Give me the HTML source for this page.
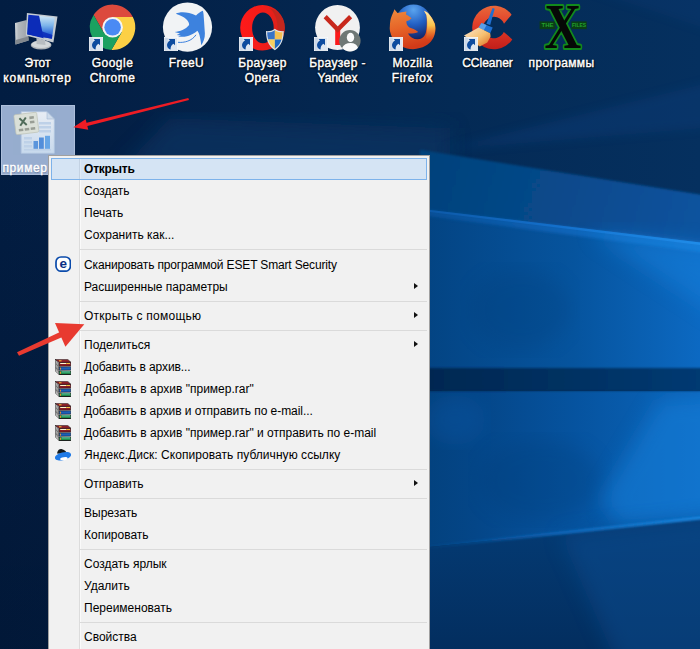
<!DOCTYPE html>
<html lang="ru">
<head>
<meta charset="utf-8">
<title>Открыть с помощью</title>
<style>
html,body{margin:0;padding:0;}
body{width:700px;height:649px;overflow:hidden;position:relative;background:#021a3a;font-family:"Liberation Sans",sans-serif;}
#bg{position:absolute;left:0;top:0;width:700px;height:649px;display:block;}
.lbl{position:absolute;left:-10px;width:95px;top:56px;text-align:center;color:#fff;font-size:12px;line-height:15px;
 -webkit-text-stroke:0.4px #fff;text-shadow:0 1px 2px rgba(0,0,0,.9),0 0 2px rgba(0,0,0,.7),1px 1px 1px rgba(0,0,0,.6);}
#sel{position:absolute;left:1px;top:105px;width:74px;height:70px;background:#97adcf;box-sizing:border-box;border:1px solid #adbfdb;}
#menu{position:absolute;left:48px;top:155px;width:382px;height:497px;box-sizing:border-box;border:1px solid #a0a0a0;background:#f1f1f1;padding:2px;font-size:12px;color:#000;}
#menu:before{content:"";position:absolute;left:30px;top:2px;bottom:2px;width:1px;background:#dcdcdc;border-right:1px solid #fafafa;}
.mi.hl:before{content:"";position:absolute;left:27px;top:0;bottom:0;width:1px;background:#c3d2e3;border-right:1px solid #dfeaf6;}
.mi{position:relative;height:22px;line-height:23px;padding-left:33px;white-space:nowrap;box-sizing:border-box;}
.mi.hl{background:#d5e4f4;border:1px solid #7db2ea;line-height:21px;padding-left:32px;font-weight:bold;letter-spacing:-0.2px;}
.sep{height:7px;position:relative;}
.sep:after{content:"";position:absolute;left:29px;right:0;top:3px;height:1px;background:#dadada;}
.sub:after{content:"";position:absolute;right:9px;top:7px;border-left:4px solid #111;border-top:3.5px solid transparent;border-bottom:3.5px solid transparent;}
.mi svg{position:absolute;left:4px;top:2px;width:16px;height:16px;}
</style>
</head>
<body>
<svg id="bg" viewBox="0 0 700 649">
 <defs>
  <linearGradient id="g0" gradientUnits="userSpaceOnUse" x1="0" y1="0" x2="700" y2="0">
   <stop offset="0" stop-color="#021d42"/><stop offset="0.15" stop-color="#031f45"/><stop offset="0.45" stop-color="#04264f"/><stop offset="0.65" stop-color="#042a55"/><stop offset="1" stop-color="#05305f"/>
  </linearGradient>
  <linearGradient id="gb" gradientUnits="userSpaceOnUse" x1="430" y1="160" x2="700" y2="235">
   <stop offset="0" stop-color="#06427c"/><stop offset="0.5" stop-color="#074a8c"/><stop offset="1" stop-color="#09539f"/>
  </linearGradient>
  <linearGradient id="gp1" gradientUnits="userSpaceOnUse" x1="420" y1="0" x2="700" y2="0">
   <stop offset="0" stop-color="#034381"/><stop offset="0.15" stop-color="#04488a"/><stop offset="0.55" stop-color="#06549e"/><stop offset="1" stop-color="#0c69c2"/>
  </linearGradient>
  <linearGradient id="gp2" gradientUnits="userSpaceOnUse" x1="420" y1="0" x2="700" y2="0">
   <stop offset="0" stop-color="#03417d"/><stop offset="0.2" stop-color="#044688"/><stop offset="0.55" stop-color="#06539f"/><stop offset="1" stop-color="#0b66bc"/>
  </linearGradient>
  <linearGradient id="gl" gradientUnits="userSpaceOnUse" x1="420" y1="0" x2="700" y2="0">
   <stop offset="0" stop-color="#0c58a6"/><stop offset="0.5" stop-color="#1470cc"/><stop offset="1" stop-color="#2290ec"/>
  </linearGradient>
  <linearGradient id="gband" gradientUnits="userSpaceOnUse" x1="420" y1="0" x2="700" y2="0">
   <stop offset="0" stop-color="#032750"/><stop offset="1" stop-color="#063a72"/>
  </linearGradient>
  <linearGradient id="gd" gradientUnits="userSpaceOnUse" x1="0" y1="520" x2="0" y2="649">
   <stop offset="0" stop-color="#043b74"/><stop offset="1" stop-color="#032e5f"/>
  </linearGradient>
  <linearGradient id="gl2" gradientUnits="userSpaceOnUse" x1="420" y1="0" x2="700" y2="0">
   <stop offset="0" stop-color="#0a56a2" stop-opacity="0"/><stop offset="0.5" stop-color="#1068bc"/><stop offset="1" stop-color="#1c88e2"/>
  </linearGradient>
  <linearGradient id="gv" gradientUnits="userSpaceOnUse" x1="0" y1="150" x2="0" y2="649"><stop offset="0" stop-color="#000c20" stop-opacity="0"/><stop offset="1" stop-color="#000c20" stop-opacity="0.3"/></linearGradient>
  <filter id="b1"><feGaussianBlur stdDeviation="0.8"/></filter>
  <filter id="b2"><feGaussianBlur stdDeviation="1.5"/></filter>
  <filter id="b4"><feGaussianBlur stdDeviation="5"/></filter>
  <filter id="b8"><feGaussianBlur stdDeviation="10"/></filter>
 </defs>
 <rect width="700" height="649" fill="url(#g0)"/>
 <rect x="0" y="150" width="430" height="499" fill="url(#gv)"/>
 <polygon points="170,118 450,128 450,170 120,170" fill="#083664" opacity="0.65" filter="url(#b8)"/>
 <polygon points="560,-20 740,-20 740,40" fill="#0b3d7c" opacity="0.25" filter="url(#b4)"/>
 <polygon points="440,150 740,75 740,125" fill="#0c3c7a" opacity="0.4" filter="url(#b4)"/>
 <polygon points="420,149.800 730,199.400 730,250 420,212" fill="url(#gb)" filter="url(#b1)"/>
 <polygon points="420,208.700 730,246 730,372 420,372" fill="url(#gp1)"/>
 <polygon points="420,209 730,246.300 730,256 420,215" fill="url(#gl)" opacity="0.55" filter="url(#b2)"/>
 <polygon points="420,208.700 730,246 730,248.800 420,210.700" fill="url(#gl)"/>
 <polygon points="420,391 730,391 730,514.800 420,548.100" fill="url(#gp2)"/>
 <polygon points="600,500 660,400 740,395 740,519 620,527" fill="#1580dc" opacity="0.55" filter="url(#b8)"/>
 <polygon points="590,232 740,250 740,330" fill="#1580dc" opacity="0.5" filter="url(#b8)"/>
 <ellipse cx="520" cy="310" rx="50" ry="40" fill="#033b74" opacity="0.22" filter="url(#b8)"/>
 <ellipse cx="540" cy="480" rx="60" ry="40" fill="#033b74" opacity="0.25" filter="url(#b8)"/>
 <ellipse cx="455" cy="420" rx="30" ry="25" fill="#0b5cae" opacity="0.3" filter="url(#b8)"/>
 <rect x="420" y="368" width="320" height="23" fill="url(#gband)" filter="url(#b1)"/>
 <polygon points="420,548.100 730,514.800 730,660 420,660" fill="url(#gd)"/>
 <polygon points="560,534 740,514 740,670 620,670" fill="#0a4f94" opacity="0.45" filter="url(#b8)"/>
 <polygon points="420,546.600 730,513.300 730,516.300 420,549.600" fill="url(#gl2)" filter="url(#b1)"/>
</svg>


<div id="sel"></div>
<svg id="art" viewBox="0 0 700 649" style="position:absolute;left:0;top:0;width:700px;height:649px;">
 <defs>
  <linearGradient id="scr" x1="0" y1="0" x2="0" y2="1"><stop offset="0" stop-color="#d8ecf7"/><stop offset="0.45" stop-color="#7db4ea"/><stop offset="0.8" stop-color="#2c68d8"/><stop offset="1" stop-color="#0d32c0"/></linearGradient>
  <linearGradient id="slv" x1="0" y1="0" x2="1" y2="0"><stop offset="0" stop-color="#d4d8dc"/><stop offset="0.25" stop-color="#b4b9be"/><stop offset="1" stop-color="#9aa0a6"/></linearGradient>
  <linearGradient id="opr" x1="0" y1="0" x2="1" y2="0"><stop offset="0" stop-color="#ff1a1a"/><stop offset="0.5" stop-color="#f21c18"/><stop offset="1" stop-color="#d8241c"/></linearGradient>
  <radialGradient id="ffg" cx="0.5" cy="0.15" r="0.9"><stop offset="0" stop-color="#5aa4ee"/><stop offset="0.45" stop-color="#2360c4"/><stop offset="0.8" stop-color="#16327c"/><stop offset="1" stop-color="#101c50"/></radialGradient>
  <linearGradient id="fox" x1="0" y1="0" x2="0.25" y2="1"><stop offset="0" stop-color="#ee8a3c"/><stop offset="0.5" stop-color="#e66428"/><stop offset="1" stop-color="#d23a18"/></linearGradient>
  <linearGradient id="foxt" x1="0" y1="0" x2="0" y2="1"><stop offset="0" stop-color="#fff0b0"/><stop offset="0.5" stop-color="#fbc24a"/><stop offset="1" stop-color="#ee7a28" stop-opacity="0"/></linearGradient>
  <linearGradient id="ccr" x1="0" y1="0" x2="0" y2="1"><stop offset="0" stop-color="#e8683a"/><stop offset="0.45" stop-color="#e23c28"/><stop offset="1" stop-color="#c21e1a"/></linearGradient>
  <linearGradient id="brs" x1="0" y1="0" x2="1" y2="1"><stop offset="0" stop-color="#fbe6d2"/><stop offset="0.55" stop-color="#f6c070"/><stop offset="1" stop-color="#d86a20"/></linearGradient>
  <linearGradient id="pg" x1="0" y1="0" x2="0" y2="1"><stop offset="0" stop-color="#ffffff"/><stop offset="1" stop-color="#d6e6f6"/></linearGradient>
  <g id="sc">
   <rect x="0.4" y="0.4" width="13.2" height="13.200" fill="#dfe7f1" stroke="#f7f9fc" stroke-width="0.8"/>
   <rect x="0.8" y="0.8" width="3" height="12.400" fill="#c3d1e4" opacity="0.7"/>
   <path d="M4.6 2 H11 V8.3 L9.4 6.700 C7.600 7.800 6.400 9.800 6.600 12.600 C5.200 12.400 3.600 11 3.100 9 C2.700 6.800 3.800 4.600 6 3.400 Z" fill="#0e4c9f"/>
  </g>
 </defs>

 <!-- Этот компьютер -->
 <g>
  <polygon points="15,23 26.6,20 28.700,40.400 15.500,44.500" fill="url(#slv)"/>
  <polygon points="15.500,40 28.300,36.500 28.700,40.400 15.500,44.500" fill="#82888e"/>
  <ellipse cx="41.1" cy="45" rx="10.400" ry="4.500" fill="#aeb3b7"/>
  <ellipse cx="41.1" cy="44.400" rx="9.400" ry="3.600" fill="#d4d8da"/>
  <polygon points="36.500,38 45,40 45.500,45 36.500,44" fill="#b8bdc1"/>
  <polygon points="26.900,13 57.500,16.400 53.400,42.500 25.800,35.400" fill="#c6ccd2"/>
  <polygon points="28.300,14.700 54.800,17.600 51.900,38.700 27.200,34.200" fill="url(#scr)"/>
  <polygon points="28.300,14.700 39.100,15.800 43.600,38.300 27.200,34.200" fill="#0c2cb8"/>
  <polygon points="27.200,34.200 51.900,38.700 52.400,35 38,30" fill="#0c2cb8" opacity="0.85"/>
 </g>

 <!-- Google Chrome -->
 <g transform="translate(75,0)">
  <path d="M37.6 27.3 L37.6 17 L57.83 17 A22.7 22.7 0 0 0 18.57 14.93 L28.68 32.45 Z" fill="#dc4a3d"/>
  <path d="M37.6 27.3 L37.6 17 L57.83 17 A22.7 22.7 0 0 1 36.41 49.97 L46.52 32.45 Z" fill="#fcd045"/>
  <path d="M37.6 27.3 L46.52 32.45 L36.41 49.97 A22.7 22.7 0 0 1 18.57 14.93 L28.68 32.45 Z" fill="#1ba160"/>
  <circle cx="37.6" cy="27.3" r="10.3" fill="#f4f4f4"/>
  <circle cx="37.6" cy="27.3" r="8.3" fill="#4a8af4"/>
  <use href="#sc" x="14" y="37"/>
 </g>

 <!-- FreeU -->
 <g transform="translate(150,0)">
  <circle cx="37.5" cy="27.1" r="24.600" fill="#f1f3f5"/>
  <path d="M25.8 13.700 C30 11.500 38 11.500 46 15.600 C48 13.500 50.500 11.500 52.800 10.800 C53.500 13 53.700 15 53.700 16.600 C54.200 22 54.500 28 54.900 33.300 C55 38 53.500 42 51.200 45.300 C51 42 50.500 39.500 50 37.400 C49.500 34.500 48.500 32.500 47.400 30.800 C46 32 42 35 37 36.300 C34 37 31 37 28 36.500 L31 35.500 L26.600 35 L30 33.600 L24.600 32 C30 31.500 35.500 29.500 39.100 25 C39.500 21 35 16.500 25.800 13.700 Z" fill="#3d82de"/>
  <path d="M27.900 42.300 C34 43 42 41 46 34.800" fill="none" stroke="#3d82de" stroke-width="1"/>
  <use href="#sc" x="14" y="37"/>
 </g>

 <!-- Opera -->
 <g transform="translate(225,0)">
  <path fill-rule="evenodd" d="M37.5 5 A22.300 22.800 0 1 0 37.500 50.600 A22.300 22.800 0 1 0 37.500 5 Z M37.900 12.500 A10.800 15.400 0 1 1 37.900 43.300 A10.800 15.400 0 1 1 37.900 12.500 Z" fill="url(#opr)"/>
  <path d="M44 8 C53 10 59.800 18 59.800 27.800 C59.800 37.500 53 46 44 48 C49 45 52.500 37 52.500 27.800 C52.500 18.500 49 11 44 8 Z" fill="#c0281e" opacity="0.85"/>
  <g transform="translate(41,28.700)">
   <path d="M8.850 0 C6 2.200 3 2.600 0 2.400 C0 10.400 2 17.200 8.850 21.600 C15.700 17.200 17.700 10.400 17.700 2.400 C14.700 2.600 11.700 2.200 8.850 0 Z" fill="#dfe3e6"/>
   <path d="M8.850 1.500 C6.200 3.300 3.700 3.700 1.200 3.600 C1.200 6.200 1.500 8.600 2.200 10.800 L8.850 10.800 Z" fill="#3873c8"/>
   <path d="M8.850 1.500 C11.500 3.300 14 3.700 16.500 3.600 C16.500 6.200 16.200 8.600 15.500 10.800 L8.850 10.800 Z" fill="#f6c052"/>
   <path d="M2.200 10.800 C3.300 14.600 5.400 17.700 8.850 20.100 L8.850 10.800 Z" fill="#f8d060"/>
   <path d="M15.500 10.800 C14.400 14.600 12.300 17.700 8.850 20.100 L8.850 10.800 Z" fill="#1f6ac4"/>
  </g>
  <use href="#sc" x="14" y="37"/>
 </g>

 <!-- Yandex -->
 <g transform="translate(300,0)">
  <circle cx="37.5" cy="27.500" r="22.400" fill="#f1f1f1"/>
  <rect x="35.2" y="27" width="5" height="18" fill="#fb1a1a"/>
  <path d="M25.200 16.600 L37.700 29.500 L50.600 16.600" fill="none" stroke="#c8281c" stroke-width="4.400" stroke-linejoin="miter"/>
  <circle cx="49.900" cy="40.800" r="10.700" fill="#6e7775"/>
  <ellipse cx="50.500" cy="37.400" rx="3.700" ry="4.600" fill="#fafafa"/>
  <path d="M42.200 47.800 C43.500 44.600 46.500 43 50.500 43 C54.500 43 57 44.600 58 47.800 C56 50.400 53.200 51.500 50 51.500 C46.800 51.500 44 50.400 42.200 47.800 Z" fill="#fafafa"/>
  <use href="#sc" x="14" y="37"/>
 </g>

 <!-- Firefox -->
 <g transform="translate(375,0)">
  <circle cx="38.500" cy="22.500" r="18" fill="url(#ffg)"/>
  <path d="M19.400 9.200 L22.500 13 C25 12.500 28 12 31.500 11.600 L31 14.500 C33 15.500 35 17 36.500 18.300 C35 20 33.500 20.800 31.500 21 C31 24 32.500 26 34.500 27.500 C37 28.500 40 29 43.300 32 C40 33.500 36 33.800 33 33.500 C35 37.500 39 39.500 43 39.300 C47 39 50 36.500 51 32 C52 26 52 20 51.400 15 L49 10.800 C53 12 57 17 60 24 C61.200 30 60 36 57 40 C54 44.500 48 48.500 38 49.200 C30 49.200 22 45 17.500 38 C15 33 14.500 29 14.800 27 C15 22 15.500 19 16 18 C17 15 18.500 12 19.400 9.200 Z" fill="url(#fox)"/>
  <path d="M49 10.800 C53 12 57 17 59.800 24 C61 30 60 35 57.500 39 C55.500 41 53 41 51 38 C52.500 30 52.500 20 51.400 15 Z" fill="url(#foxt)"/>
  <use href="#sc" x="14" y="37"/>
 </g>

 <!-- CCleaner -->
 <g transform="translate(450,0)">
  <path d="M61.600 14.700 A21.800 21.800 0 1 0 62.300 39.400 L53.800 31.900 A10.700 10.700 0 1 1 54 23.700 Z" fill="url(#ccr)"/>
  <path d="M42.600 8 L44.700 8.700 L40.200 25 L36.400 23.800 Z" fill="#1f6fd0"/>
  <path d="M31.500 22.900 L42.700 27.500 L40.200 33.300 L28.600 27.500 Z" fill="#1f6fd0"/>
  <path d="M31.500 22.900 L36.500 25 L33.800 30.200 L28.600 27.500 Z" fill="#5a9ee8"/>
  <path d="M28.600 27.500 L40.200 33.300 L40.600 36.600 L37.300 42.400 L29.800 46.600 L14 35.400 L21.500 31.600 Z" fill="url(#brs)"/>
  <use href="#sc" x="14" y="37"/>
 </g>

 <!-- программы (X) -->
 <g transform="translate(525,0)">
  <rect x="14.600" y="21.400" width="15.800" height="7.700" fill="#0a3f14"/>
  <rect x="46.300" y="21.400" width="15.400" height="7.700" fill="#0a3f14"/>
  <text x="22.500" y="27.300" text-anchor="middle" font-family="'Liberation Sans',sans-serif" font-weight="bold" font-size="6" fill="#22a02e">THE</text>
  <text x="54" y="27.300" text-anchor="middle" font-family="'Liberation Sans',sans-serif" font-weight="bold" font-size="6" textLength="14" lengthAdjust="spacingAndGlyphs" fill="#22a02e">FILES</text>
  <text x="19.600" y="48" font-family="'Liberation Serif',serif" font-weight="bold" font-size="63.500" textLength="36.700" lengthAdjust="spacingAndGlyphs" fill="#060806" stroke="#128a1d" stroke-width="4" stroke-linejoin="round" paint-order="stroke">X</text>
 </g>

 <!-- пример: file icon -->
 <g>
  <path d="M21.200 111.700 H47 L54.300 119 V153.300 H21.200 Z" fill="url(#pg)" stroke="#b9cde6" stroke-width="0.800"/>
  <path d="M47 111.700 V119 H54.300 Z" fill="#dfe9f4" stroke="#a9bdd6" stroke-width="0.600"/>
  <g fill="#c9dcf0"><rect x="24" y="137" width="8" height="2.500"/><rect x="24" y="141" width="8" height="2.500"/><rect x="24" y="145" width="8" height="2.500"/><rect x="24" y="149" width="27" height="1.600"/><rect x="39" y="122" width="12" height="2.500"/><rect x="39" y="126" width="12" height="2.500"/><rect x="39" y="130" width="12" height="2.500"/></g>
  <rect x="33.500" y="141" width="4.500" height="7.800" fill="#4b8fe0"/>
  <rect x="39" y="137.500" width="4.800" height="11.300" fill="#3f86de"/>
  <rect x="45" y="135.800" width="5" height="13" fill="#5aa4ee"/>
  <g transform="rotate(-7 26 123)">
   <rect x="14.800" y="113.500" width="23" height="20" rx="1.500" fill="#efefdc" stroke="#c9c9b0" stroke-width="0.700"/>
   <path d="M20 117.500 L26.500 125 M26.500 117.500 L20 125" stroke="#3d5a3a" stroke-width="2" fill="none"/>
   <g fill="#9a9a86"><rect x="30" y="117" width="4.500" height="2.600"/><rect x="30" y="121.500" width="4.500" height="2.600"/><rect x="18" y="128" width="4.500" height="2.600"/><rect x="24" y="128" width="4.500" height="2.600"/><rect x="30" y="128" width="4.500" height="2.600"/></g>
  </g>
 </g>

 <rect x="13" y="109" width="44" height="46" fill="#97adcf" opacity="0.22"/>
 <!-- arrow 1 -->
 <g fill="#ee1c24" stroke="none">
  <polygon points="188.300,97.900 189,100.100 86.500,126.300 85.700,122.900"/>
  <polygon points="73.300,127.300 85.600,119.300 88.300,129.800"/>
 </g>
</svg>

<div class="lbl" style="left:-10px">Этот<br><span style="letter-spacing:0.9px">компьютер</span></div>
<div class="lbl" style="left:65px"><span style="letter-spacing:0.5px">Google<br>Chrome</span></div>
<div class="lbl" style="left:139px"><span style="letter-spacing:0.4px">FreeU</span></div>
<div class="lbl" style="left:215px"><span style="letter-spacing:0.4px">Браузер<br>Opera</span></div>
<div class="lbl" style="left:290px"><span style="letter-spacing:0.4px">Браузер -</span><br>Yandex</div>
<div class="lbl" style="left:365px"><span style="letter-spacing:0.4px">Mozilla</span><br><span style="letter-spacing:0.7px">Firefox</span></div>
<div class="lbl" style="left:440px">CCleaner</div>
<div class="lbl" style="left:514px"><span style="letter-spacing:0.35px">программы</span></div>
<div class="lbl" style="left:2.500px;top:161px;width:60px;text-align:left;letter-spacing:0.600px;text-shadow:0 1px 1px rgba(40,60,100,.55)">пример</div>

<div id="menu">
 <div class="mi hl">Открыть</div>
 <div class="mi">Создать</div>
 <div class="mi">Печать</div>
 <div class="mi">Сохранить как...</div>
 <div class="sep" style="height:8px"></div>
 <div class="mi" style="letter-spacing:-0.15px"><svg viewBox="0 0 16 16"><rect x="1" y="1" width="14.400" height="14.200" rx="5" ry="5" fill="#fff" stroke="#0b4bab" stroke-width="1.700"/><text x="8.200" y="11.500" text-anchor="middle" font-family="'Liberation Sans',sans-serif" font-weight="bold" font-size="13.500" fill="#0a2f86">e</text></svg>Сканировать программой ESET Smart Security</div>
 <div class="mi sub">Расширенные параметры</div>
 <div class="sep"></div>
 <div class="mi sub" style="letter-spacing:0.25px">Открыть с помощью</div>
 <div class="sep"></div>
 <div class="mi sub">Поделиться</div>
 <div class="mi" style="letter-spacing:-0.1px"><svg viewBox="0 0 16 16" style="top:3px"><g stroke="#111" stroke-width="0.500" stroke-linejoin="round"><polygon points="0.200,8.300 4.200,12 4.200,15.600 0.200,12.100" fill="#fff"/><polygon points="4.200,12 15.800,12 15.800,15.600 4.200,15.600" fill="#1f8a4a"/><polygon points="0.200,4.500 4.200,8 4.200,11.200 0.200,7.700" fill="#fff"/><polygon points="4.200,8 15.800,7.700 15.800,11.100 4.200,11.200" fill="#1c5fb8"/><polygon points="0.200,0.400 4.200,3.500 4.200,7.300 0.200,3.800" fill="#fff"/><polygon points="4.200,3.500 15.800,3.200 15.800,6.900 4.200,7.300" fill="#8a1c24"/><polygon points="0.200,0.400 12.800,0.400 15.800,3.200 4.200,3.500" fill="#8e2029"/></g><rect x="5.200" y="4" width="6" height="1" fill="#fff4d0"/><rect x="11.200" y="4" width="3.800" height="1" fill="#f6c040"/><g stroke="#1a1a1a" stroke-width="0.500"><path d="M0.200 1.700 L4.200 4.900 M0.200 2.900 L4.200 6.100 M0.200 5.700 L4.200 9.100 M0.200 6.800 L4.200 10.200 M0.200 9.500 L4.200 13.100 M0.200 10.800 L4.200 14.400"/></g><rect x="4.200" y="15.200" width="11.600" height="0.800" fill="#111"/><rect x="5" y="8.700" width="1" height="1.900" fill="#e8902c"/><rect x="5" y="12.600" width="1" height="2.200" fill="#e8902c"/><rect x="6.500" y="12.500" width="8.500" height="0.800" fill="#7fe0d0"/><rect x="4" y="1.200" width="2.500" height="1.100" fill="#e8b030"/></svg>Добавить в архив...</div>
 <div class="mi"><svg viewBox="0 0 16 16" style="top:3px"><g stroke="#111" stroke-width="0.500" stroke-linejoin="round"><polygon points="0.200,8.300 4.200,12 4.200,15.600 0.200,12.100" fill="#fff"/><polygon points="4.200,12 15.800,12 15.800,15.600 4.200,15.600" fill="#1f8a4a"/><polygon points="0.200,4.500 4.200,8 4.200,11.200 0.200,7.700" fill="#fff"/><polygon points="4.200,8 15.800,7.700 15.800,11.100 4.200,11.200" fill="#1c5fb8"/><polygon points="0.200,0.400 4.200,3.500 4.200,7.300 0.200,3.800" fill="#fff"/><polygon points="4.200,3.500 15.800,3.200 15.800,6.900 4.200,7.300" fill="#8a1c24"/><polygon points="0.200,0.400 12.800,0.400 15.800,3.200 4.200,3.500" fill="#8e2029"/></g><rect x="5.200" y="4" width="6" height="1" fill="#fff4d0"/><rect x="11.200" y="4" width="3.800" height="1" fill="#f6c040"/><g stroke="#1a1a1a" stroke-width="0.500"><path d="M0.200 1.700 L4.200 4.900 M0.200 2.900 L4.200 6.100 M0.200 5.700 L4.200 9.100 M0.200 6.800 L4.200 10.200 M0.200 9.500 L4.200 13.100 M0.200 10.800 L4.200 14.400"/></g><rect x="4.200" y="15.200" width="11.600" height="0.800" fill="#111"/><rect x="5" y="8.700" width="1" height="1.900" fill="#e8902c"/><rect x="5" y="12.600" width="1" height="2.200" fill="#e8902c"/><rect x="6.500" y="12.500" width="8.500" height="0.800" fill="#7fe0d0"/><rect x="4" y="1.200" width="2.500" height="1.100" fill="#e8b030"/></svg>Добавить в архив "пример.rar"</div>
 <div class="mi" style="letter-spacing:-0.05px"><svg viewBox="0 0 16 16" style="top:3px"><g stroke="#111" stroke-width="0.500" stroke-linejoin="round"><polygon points="0.200,8.300 4.200,12 4.200,15.600 0.200,12.100" fill="#fff"/><polygon points="4.200,12 15.800,12 15.800,15.600 4.200,15.600" fill="#1f8a4a"/><polygon points="0.200,4.500 4.200,8 4.200,11.200 0.200,7.700" fill="#fff"/><polygon points="4.200,8 15.800,7.700 15.800,11.100 4.200,11.200" fill="#1c5fb8"/><polygon points="0.200,0.400 4.200,3.500 4.200,7.300 0.200,3.800" fill="#fff"/><polygon points="4.200,3.500 15.800,3.200 15.800,6.900 4.200,7.300" fill="#8a1c24"/><polygon points="0.200,0.400 12.800,0.400 15.800,3.200 4.200,3.500" fill="#8e2029"/></g><rect x="5.200" y="4" width="6" height="1" fill="#fff4d0"/><rect x="11.200" y="4" width="3.800" height="1" fill="#f6c040"/><g stroke="#1a1a1a" stroke-width="0.500"><path d="M0.200 1.700 L4.200 4.900 M0.200 2.900 L4.200 6.100 M0.200 5.700 L4.200 9.100 M0.200 6.800 L4.200 10.200 M0.200 9.500 L4.200 13.100 M0.200 10.800 L4.200 14.400"/></g><rect x="4.200" y="15.200" width="11.600" height="0.800" fill="#111"/><rect x="5" y="8.700" width="1" height="1.900" fill="#e8902c"/><rect x="5" y="12.600" width="1" height="2.200" fill="#e8902c"/><rect x="6.500" y="12.500" width="8.500" height="0.800" fill="#7fe0d0"/><rect x="4" y="1.200" width="2.500" height="1.100" fill="#e8b030"/></svg>Добавить в архив и отправить по e-mail...</div>
 <div class="mi"><svg viewBox="0 0 16 16" style="top:3px"><g stroke="#111" stroke-width="0.500" stroke-linejoin="round"><polygon points="0.200,8.300 4.200,12 4.200,15.600 0.200,12.100" fill="#fff"/><polygon points="4.200,12 15.800,12 15.800,15.600 4.200,15.600" fill="#1f8a4a"/><polygon points="0.200,4.500 4.200,8 4.200,11.200 0.200,7.700" fill="#fff"/><polygon points="4.200,8 15.800,7.700 15.800,11.100 4.200,11.200" fill="#1c5fb8"/><polygon points="0.200,0.400 4.200,3.500 4.200,7.300 0.200,3.800" fill="#fff"/><polygon points="4.200,3.500 15.800,3.200 15.800,6.900 4.200,7.300" fill="#8a1c24"/><polygon points="0.200,0.400 12.800,0.400 15.800,3.200 4.200,3.500" fill="#8e2029"/></g><rect x="5.200" y="4" width="6" height="1" fill="#fff4d0"/><rect x="11.200" y="4" width="3.800" height="1" fill="#f6c040"/><g stroke="#1a1a1a" stroke-width="0.500"><path d="M0.200 1.700 L4.200 4.900 M0.200 2.900 L4.200 6.100 M0.200 5.700 L4.200 9.100 M0.200 6.800 L4.200 10.200 M0.200 9.500 L4.200 13.100 M0.200 10.800 L4.200 14.400"/></g><rect x="4.200" y="15.200" width="11.600" height="0.800" fill="#111"/><rect x="5" y="8.700" width="1" height="1.900" fill="#e8902c"/><rect x="5" y="12.600" width="1" height="2.200" fill="#e8902c"/><rect x="6.500" y="12.500" width="8.500" height="0.800" fill="#7fe0d0"/><rect x="4" y="1.200" width="2.500" height="1.100" fill="#e8b030"/></svg>Добавить в архив "пример.rar" и отправить по e-mail</div>
 <div class="mi" style="letter-spacing:0.05px"><svg viewBox="0 0 16 16"><path d="M2 7.500 C2.600 3.400 5 2.600 7.200 3.200 C9.600 3.900 11.700 5.600 12.300 8.200 Z" fill="#151a1c"/><ellipse cx="8" cy="10.200" rx="8.300" ry="3.900" transform="rotate(-14 8 10.200)" fill="#207ae6"/><ellipse cx="8.900" cy="12.700" rx="3.800" ry="1.500" transform="rotate(-8 8.900 12.700)" fill="#fff"/></svg>Яндекс.Диск: Скопировать публичную ссылку</div>
 <div class="sep"></div>
 <div class="mi sub">Отправить</div>
 <div class="sep"></div>
 <div class="mi">Вырезать</div>
 <div class="mi">Копировать</div>
 <div class="sep"></div>
 <div class="mi">Создать ярлык</div>
 <div class="mi">Удалить</div>
 <div class="mi">Переименовать</div>
 <div class="sep"></div>
 <div class="mi">Свойства</div>
</div>

<svg id="arr2" viewBox="0 0 700 649" style="position:absolute;left:0;top:0;width:700px;height:649px;pointer-events:none;">
 <g fill="#e83a30">
  <polygon points="17,352.300 19,355.800 63,336.800 60.500,331.800"/>
  <polygon points="84.300,324.300 55,322.900 65.400,346.700"/>
 </g>
</svg>
</body>
</html>
